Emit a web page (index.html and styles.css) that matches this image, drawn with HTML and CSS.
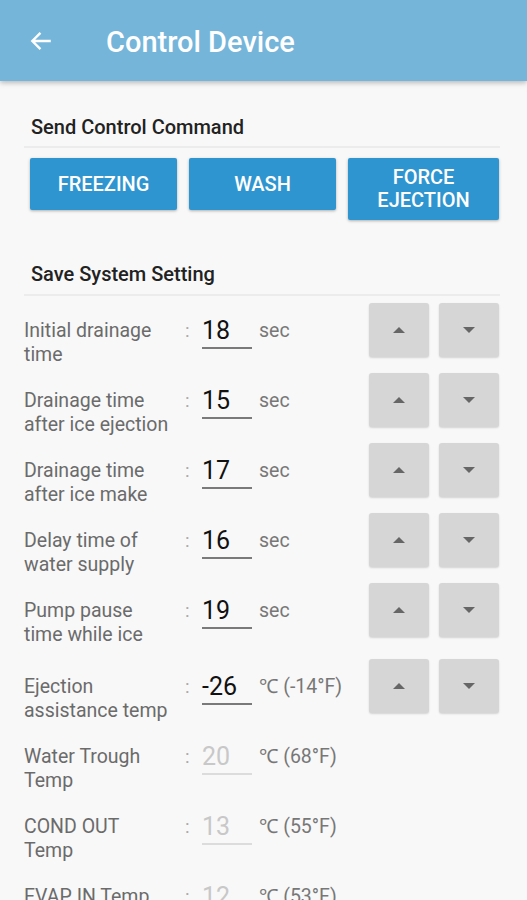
FILE: index.html
```html
<!DOCTYPE html>
<html lang="en">

<head>
    <meta charset="UTF-8">
    <meta name="viewport" content="width=device-width, initial-scale=1.0">
    <title>Control Device</title>
    <link rel="stylesheet" href="styles.css">
</head>

<body>
    <header class="app-bar">
        <svg class="back-icon" width="26" height="26" viewBox="0 0 24 24">
            <path d="M21 12H4.5M11.5 4.5L4 12l7.5 7.5" fill="none" stroke="#fff" stroke-width="2.2" />
        </svg>
        <h1>Control Device</h1>
    </header>

    <main class="content">
        <h2 class="section-title">Send Control Command</h2>
        <div class="command-buttons">
            <button class="command">FREEZING</button>
            <button class="command">WASH</button>
            <button class="command">FORCE<br>EJECTION</button>
        </div>

        <h2 class="section-title second">Save System Setting</h2>

        <div class="setting-list">
            <div class="setting-row">
                <div class="label">Initial drainage<br>time</div>
                <div class="colon">:</div>
                <div class="value">18</div>
                <div class="unit">sec</div>
                <div class="stepper">
                    <button class="step up"></button>
                    <button class="step down"></button>
                </div>
            </div>
            <div class="setting-row">
                <div class="label">Drainage time<br>after ice ejection</div>
                <div class="colon">:</div>
                <div class="value">15</div>
                <div class="unit">sec</div>
                <div class="stepper">
                    <button class="step up"></button>
                    <button class="step down"></button>
                </div>
            </div>
            <div class="setting-row">
                <div class="label">Drainage time<br>after ice make</div>
                <div class="colon">:</div>
                <div class="value">17</div>
                <div class="unit">sec</div>
                <div class="stepper">
                    <button class="step up"></button>
                    <button class="step down"></button>
                </div>
            </div>
            <div class="setting-row">
                <div class="label">Delay time of<br>water supply</div>
                <div class="colon">:</div>
                <div class="value">16</div>
                <div class="unit">sec</div>
                <div class="stepper">
                    <button class="step up"></button>
                    <button class="step down"></button>
                </div>
            </div>
            <div class="setting-row tall">
                <div class="label">Pump pause<br>time while ice</div>
                <div class="colon">:</div>
                <div class="value">19</div>
                <div class="unit">sec</div>
                <div class="stepper">
                    <button class="step up"></button>
                    <button class="step down"></button>
                </div>
            </div>
            <div class="setting-row">
                <div class="label">Ejection<br>assistance temp</div>
                <div class="colon">:</div>
                <div class="value">-26</div>
                <div class="unit">&#8451; (-14&deg;F)</div>
                <div class="stepper">
                    <button class="step up"></button>
                    <button class="step down"></button>
                </div>
            </div>
            <div class="setting-row">
                <div class="label">Water Trough<br>Temp</div>
                <div class="colon">:</div>
                <div class="value disabled">20</div>
                <div class="unit">&#8451; (68&deg;F)</div>
            </div>
            <div class="setting-row">
                <div class="label">COND OUT<br>Temp</div>
                <div class="colon">:</div>
                <div class="value disabled">13</div>
                <div class="unit">&#8451; (55&deg;F)</div>
            </div>
            <div class="setting-row">
                <div class="label">EVAP IN Temp</div>
                <div class="colon">:</div>
                <div class="value disabled">12</div>
                <div class="unit">&#8451; (53&deg;F)</div>
            </div>
        </div>
    </main>
</body>

</html>
```

FILE: styles.css
```css
body {
    margin: 0;
    font-family: Roboto, "Noto Sans", Arial, sans-serif;
    background-color: #f8f8f8;
}

.app-bar {
    display: flex;
    align-items: center;
    height: 81px;
    padding-left: 28px;
    background-color: #75b5da;
    box-shadow: 0 2px 5px rgba(0, 0, 0, 0.25);
}

.app-bar h1 {
    margin: 2px 0 0 52px;
    font-size: 29px;
    font-weight: 500;
    color: white;
}

.content {
    padding: 0 27px 0 24px;
}

.section-title {
    margin: 0;
    padding: 34px 7px 7px;
    font-size: 20px;
    font-weight: 500;
    line-height: 24px;
    color: #222;
    border-bottom: 2px solid #ececec;
}

.section-title.second {
    padding-top: 42px;
    padding-bottom: 8px;
}

.command-buttons {
    display: grid;
    grid-template-columns: 147px 147px 151px;
    gap: 12px;
    align-items: start;
    margin-top: 10px;
    padding-left: 6px;
}

.command {
    min-height: 52px;
    padding: 8px 4px;
    border: none;
    border-radius: 2px;
    background-color: #2f95d0;
    color: white;
    font-family: inherit;
    font-size: 20px;
    font-weight: 500;
    line-height: 23px;
    box-shadow: 0 1px 3px rgba(0, 0, 0, 0.3);
}

.setting-list {
    margin-top: 7px;
}

.setting-row {
    display: flex;
    align-items: flex-start;
    height: 70px;
}

.setting-row.tall {
    height: 76px;
}

.label {
    width: 161px;
    padding-top: 16px;
    font-size: 19.5px;
    line-height: 24px;
    color: #6b6b6b;
    white-space: nowrap;
}

.colon {
    width: 17px;
    padding-top: 16px;
    font-size: 19px;
    line-height: 24px;
    color: #aaa;
}

.value {
    width: 50px;
    margin-top: 14px;
    height: 30px;
    font-size: 25px;
    line-height: 28px;
    color: #111;
    border-bottom: 2px solid #7a7a7a;
}

.value.disabled {
    color: #c8c8c8;
    border-bottom-color: #dcdcdc;
}

.unit {
    flex: 1;
    margin-left: 7px;
    padding-top: 16px;
    font-size: 19.5px;
    line-height: 24px;
    color: #777;
}

.stepper {
    display: flex;
    gap: 10px;
    margin-right: 1px;
}

.step {
    position: relative;
    width: 60px;
    height: 54px;
    border: none;
    border-radius: 3px;
    background-color: #d6d6d6;
    box-shadow: 0 1px 2px rgba(0, 0, 0, 0.15);
}

.step::after {
    content: "";
    position: absolute;
    left: 24px;
    top: 24px;
    border-left: 6px solid transparent;
    border-right: 6px solid transparent;
}

.step.up::after {
    border-bottom: 6px solid #666;
}

.step.down::after {
    border-top: 6px solid #666;
}
```
